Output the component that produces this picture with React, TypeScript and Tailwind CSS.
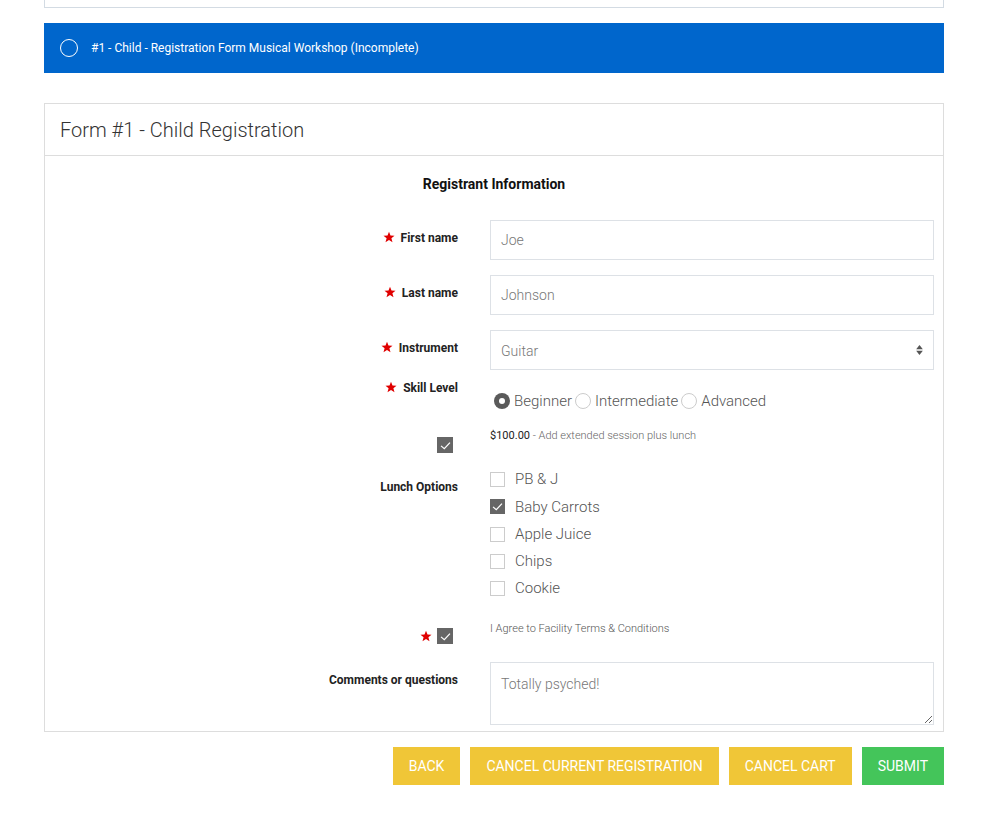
import React from 'react';

function Star() {
  return (
    <svg viewBox="0 0 24 24" className="h-[12px] w-[12px] shrink-0" fill="#e00000">
      <polygon points="12,1.5 15,9 23,9.3 16.8,14.3 19,22.3 12,17.8 5,22.3 7.2,14.3 1,9.3 9,9" />
    </svg>
  );
}

function DarkCheck() {
  return (
    <span className="flex h-[16px] w-[16px] items-center justify-center bg-[#666666]">
      <svg viewBox="0 0 16 16" className="h-[13px] w-[13px]" fill="none" stroke="#ffffff" strokeWidth="1.5">
        <path d="M2.5 8.5 L6.5 12 L13.5 4.5" />
      </svg>
    </span>
  );
}

function Box({ checked }: { checked?: boolean }) {
  if (checked) {
    return (
      <span className="flex h-[15px] w-[15px] items-center justify-center bg-[#666666]">
        <svg viewBox="0 0 16 16" className="h-[13px] w-[13px]" fill="none" stroke="#ffffff" strokeWidth="1.5">
          <path d="M2.5 8.5 L6.5 12 L13.5 4.5" />
        </svg>
      </span>
    );
  }
  return <span className="h-[15px] w-[15px] border border-[#cccccc] bg-white" />;
}

function Radio({ checked }: { checked?: boolean }) {
  return checked ? (
    <span className="flex h-[16px] w-[16px] items-center justify-center rounded-full bg-[#5a5a5a]">
      <span className="h-[6px] w-[6px] rounded-full bg-white" />
    </span>
  ) : (
    <span className="h-[16px] w-[16px] rounded-full border border-[#cccccc] bg-white" />
  );
}

function Label({ text, required, className = '' }: { text: string; required?: boolean; className?: string }) {
  return (
    <div className={`flex w-[429px] shrink-0 items-start justify-end gap-[6px] pr-4 ${className}`}>
      {required && <Star />}
      <span className="text-[12px] font-bold leading-[14px] text-[#222222]">{text}</span>
    </div>
  );
}

const lunch = [
  { name: 'PB & J', checked: false },
  { name: 'Baby Carrots', checked: true },
  { name: 'Apple Juice', checked: false },
  { name: 'Chips', checked: false },
  { name: 'Cookie', checked: false },
];

export default function App() {
  return (
    <div className="min-h-[817px] bg-white font-['Roboto',sans-serif]">
      <div className="ml-[44px] w-[900px]">
        <div className="h-[8px] border-x border-b border-[#d3dbe3] bg-white" />

        <div className="mt-[15px] flex h-[50px] items-center gap-[13px] bg-[#0066cc] pl-[16px]">
          <span className="h-[18px] w-[18px] rounded-full border border-white" />
          <span className="text-[12px] font-normal text-white">#1 - Child - Registration Form Musical Workshop (Incomplete)</span>
        </div>

        <div className="mt-[30px] border border-[#dddddd] bg-white">
          <div className="flex h-[52px] items-center border-b border-[#dddddd] px-[15px]">
            <h2 className="text-[20px] font-light text-[#333333]">Form #1 - Child Registration</h2>
          </div>

          <div className="pb-[6px]">
            <h3 className="pt-[18px] text-center text-[14px] font-bold leading-[20px] text-[#111111]">Registrant Information</h3>

            <div className="mt-[26px] flex">
              <Label text="First name" required className="pt-[11px]" />
              <div className="flex-1 pl-4 pr-[9px]">
                <div className="flex h-[40px] items-center border border-[#dde1e6] pl-[10px] text-[14px] font-light text-[#777777]">Joe</div>
              </div>
            </div>

            <div className="mt-[15px] flex">
              <Label text="Last name" required className="pt-[11px]" />
              <div className="flex-1 pl-4 pr-[9px]">
                <div className="flex h-[40px] items-center border border-[#dde1e6] pl-[10px] text-[14px] font-light text-[#777777]">Johnson</div>
              </div>
            </div>

            <div className="mt-[15px] flex">
              <Label text="Instrument" required className="pt-[11px]" />
              <div className="flex-1 pl-4 pr-[9px]">
                <div className="flex h-[40px] items-center justify-between border border-[#dde1e6] pl-[10px] pr-[10px] text-[14px] font-light text-[#777777]">
                  <span className="mt-[2px]">Guitar</span>
                  <svg viewBox="0 0 8 12" className="h-[10px] w-[7px]" fill="#555555">
                    <polygon points="4,0 8,5 0,5" />
                    <polygon points="0,7 8,7 4,12" />
                  </svg>
                </div>
              </div>
            </div>

            <div className="mt-[11px] flex">
              <Label text="Skill Level" required />
              <div className="flex flex-1 items-center pl-[20px] pt-[10px] text-[15px] font-light leading-[20px] text-[#555555]">
                <Radio checked />
                <span className="ml-[4px] mr-[3px]">Beginner</span>
                <Radio />
                <span className="ml-[4px] mr-[3px]">Intermediate</span>
                <Radio />
                <span className="ml-[4px]">Advanced</span>
              </div>
            </div>

            <div className="mt-[18px] flex">
              <div className="flex w-[429px] shrink-0 justify-end pr-[21px] pt-[8px]">
                <DarkCheck />
              </div>
              <div className="flex-1 pl-4 text-[11px] leading-[14px] text-[#666666]">
                <span className="text-[#222222]">$100.00</span>
                <span className="font-light"> - Add extended session plus lunch</span>
              </div>
            </div>

            <div className="mt-[13px] flex">
              <Label text="Lunch Options" className="pt-[14px]" />
              <div className="flex flex-1 flex-col pl-4">
                {lunch.map(item => (
                  <div key={item.name} className="flex h-[27.25px] items-center gap-[10px] text-[15px] font-light text-[#555555]">
                    <Box checked={item.checked} />
                    <span>{item.name}</span>
                  </div>
                ))}
              </div>
            </div>

            <div className="mt-[20px] flex">
              <div className="flex w-[429px] shrink-0 items-center justify-end gap-[5px] pr-[21px] pt-[6px]">
                <Star />
                <DarkCheck />
              </div>
              <div className="flex-1 pl-4 text-[11px] font-light leading-[14px] text-[#555555]">I Agree to Facility Terms &amp; Conditions</div>
            </div>

            <div className="mt-[18px] flex">
              <Label text="Comments or questions" className="pt-[11px]" />
              <div className="flex-1 pl-4 pr-[9px]">
                <textarea
                  readOnly
                  defaultValue="Totally psyched!"
                  className="block h-[63px] w-full resize-y border border-[#dde1e6] px-[10px] pt-[11px] text-[14px] font-light text-[#777777] outline-none"
                />
              </div>
            </div>
          </div>
        </div>

        <div className="mt-[15px] flex justify-end gap-[10px] text-[14px] text-white">
          <button className="h-[38px] bg-[#f0c637] px-[16px] uppercase">Back</button>
          <button className="h-[38px] bg-[#f0c637] px-[16px] uppercase">Cancel Current Registration</button>
          <button className="h-[38px] bg-[#f0c637] px-[16px] uppercase">Cancel Cart</button>
          <button className="h-[38px] bg-[#44c55a] px-[16px] uppercase">Submit</button>
        </div>
      </div>
    </div>
  );
}
